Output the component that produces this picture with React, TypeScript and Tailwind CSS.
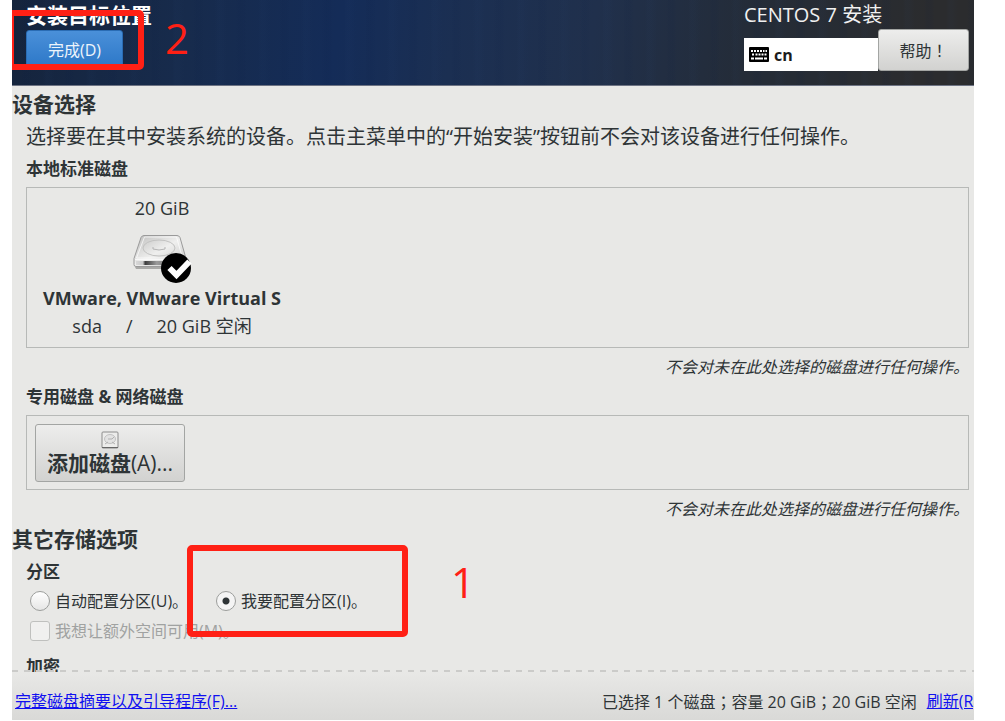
import { useState } from "react";
import type { ReactNode } from "react";

const KeyboardIcon = () => (
  <svg width="20" height="15" viewBox="0 0 20 15" aria-hidden="true">
    <rect width="20" height="15" rx="1" fill="#000" />
    <g fill="#fff">
      <path d="M2 3h2v2H2zM5 3h2v2H5zM8 3h2v2H8zM11 3h2v2h-2zM14 3h1.500v2H14zM16.500 3h1.500v2h-1.500z" />
      <path d="M3 6.500h2v2H3zM6.500 6.500h2v2h-2zM9.500 6.500h2v2h-2zM12.500 6.500h2v2h-2zM15.500 6.500h2v2h-2z" />
      <path d="M2 10.500h3v2H2zM6 10.500h8v2H6zM15 10.500h3v2h-3z" />
    </g>
  </svg>
);

const DiskIcon = () => (
  <svg width="60" height="50" viewBox="0 0 60 50" aria-hidden="true">
    <defs>
      <linearGradient id="disk-top" x1="0" y1="0" x2="1" y2="1">
        <stop offset="0" stopColor="#bdbdbc" />
        <stop offset="0.5" stopColor="#efefee" />
        <stop offset="1" stopColor="#c4c4c3" />
      </linearGradient>
      <linearGradient id="disk-front" x1="0" y1="0" x2="1" y2="0">
        <stop offset="0" stopColor="#d8d8d8" />
        <stop offset="0.15" stopColor="#c8c8c8" />
        <stop offset="0.2" stopColor="#3c3c3c" />
        <stop offset="0.45" stopColor="#9a9a9a" />
        <stop offset="1" stopColor="#5a5a5a" />
      </linearGradient>
    </defs>
    <path d="M3 33h50v2H4z" fill="#a9a9a7" />
    <path
      d="M12 1.500h33q2 0 3 2l6 21v6q0 2-2 2H4q-2 0-2-2v-6l7-21q1-2 3-2z"
      fill="url(#disk-top)"
      stroke="#9a9a9a"
    />
    <path d="M12.500 3h32l6 21h-46z" fill="none" stroke="#fff" strokeOpacity="0.7" />
    <path d="M4 27h46v4H4z" fill="url(#disk-front)" />
    <path d="M3 25.500h48" stroke="#f8f8f8" />
    <ellipse cx="27" cy="14" rx="16" ry="8" fill="none" stroke="#c2c2c1" />
    <path d="M21 13v2q6 2 12 0v-2" fill="none" stroke="#b4b4b4" />
    <circle cx="44" cy="34" r="15" fill="#000" />
    <path d="M37.500 34l7 7 13-13.500" fill="none" stroke="#fff" strokeWidth="6" />
  </svg>
);

const SmallDiskIcon = () => (
  <svg width="18" height="18" viewBox="0 0 18 18" aria-hidden="true">
    <rect x="1" y="1" width="16" height="16" rx="1" fill="#ececeb" stroke="#8c8c8c" />
    <path d="M1 16.500h16" stroke="#666" />
    <ellipse cx="9" cy="8" rx="5.500" ry="4.500" fill="#e2e2e2" stroke="#c2c2c2" />
    <path d="M4 13l3-2M14 13l-3-2M7 8h4l2-2" fill="none" stroke="#b0b0b0" />
  </svg>
);

const PanelNote = ({ children }: { children: ReactNode }) => (
  <p className="mt-[7px] text-right text-[16px] leading-6 italic">{children}</p>
);

const SectionLabel = ({ children }: { children: ReactNode }) => (
  <h3 className="text-[17px] leading-6 font-bold">{children}</h3>
);

// full-width punctuation sits in the middle of its cell
const Mark = ({ children }: { children: ReactNode }) => (
  <span className="font-['Noto_Sans_CJK_TC',sans-serif]" lang="zh-TW">
    {children}
  </span>
);

const radioClass =
  "size-5 shrink-0 appearance-none rounded-full border border-[#9c9e9c] bg-linear-to-b from-white to-[#e6e6e5] checked:bg-[radial-gradient(circle,#2e3436_0_3px,#f4f4f4_4px)]";

export default function App() {
  const [partitioning, setPartitioning] = useState("manual");

  return (
    <div className="h-screen bg-white pr-[31px] pb-px pl-3 font-['Open_Sans','Noto_Sans_CJK_SC',sans-serif] text-[#2e3436]">
      <div className="relative flex h-full flex-col overflow-hidden bg-[#e8e8e6]">
        <header className="flex h-[86px] shrink-0 justify-between border-b border-[#6d7383] bg-[repeating-linear-gradient(90deg,transparent_0_9px,#0a1c4412_12px_16px,transparent_20px_31px,#2c4a7a0d_34px_37px,transparent_43px),linear-gradient(100deg,#15243c_0%,#172b4c_18%,#142c58_34%,#1b2f52_46%,#20304c_60%,#242c38_76%,#2b2c2e_94%)] pr-[5px] pl-[14px] text-white">
          <div className="pt-px">
            <h1 className="text-[21px] leading-7 font-bold">安装目标位置</h1>
            <button
              type="button"
              className="mt-px h-10 w-[97px] rounded-[3px] border border-[#2a6cb4] bg-linear-to-b from-[#4a90d9] to-[#2a76c6] text-[16px] text-[#eef4fb]"
            >
              完成(D)
            </button>
          </div>
          <div className="w-[225px] pt-px">
            <div className="text-[20px] leading-7 text-[#f0f0f0]">CENTOS 7 安装</div>
            <div className="flex items-end">
              <div className="flex h-[33px] flex-1 items-center gap-[5px] bg-white pl-[5px] text-[16px] font-bold text-[#1c1c1c]">
                <KeyboardIcon />
                cn
              </div>
              <button
                type="button"
                className="h-[42px] w-[91px] rounded-[3px] border border-[#a3a5a3] bg-linear-to-b from-[#ededec] to-[#d2d2d0] text-[16px] text-[#2e3436]"
              >
                帮助<Mark>！</Mark>
              </button>
            </div>
          </div>
        </header>

        <main className="min-h-0 flex-1 overflow-hidden pt-1 pr-[5px]">
          <h2 className="text-[21px] leading-7 font-bold">设备选择</h2>
          <div className="pl-[14px]">
            <p className="mt-[5px] text-[20px] leading-7">
              选择要在其中安装系统的设备。点击主菜单中的“开始安装”按钮前不会对该设备进行任何操作。
            </p>
            <div className="mt-[6px]">
              <SectionLabel>本地标准磁盘</SectionLabel>
            </div>
            <div className="mt-[6px] h-[161px] border border-[#b7b9b7] pt-[6px] pl-[15px]">
              <div className="flex w-60 flex-col items-center text-[18px] leading-7 whitespace-nowrap">
                <span>20 GiB</span>
                <span className="mt-3">
                  <DiskIcon />
                </span>
                <b>VMware, VMware Virtual S</b>
                <div className="flex gap-6">
                  <span>sda</span>
                  <span>/</span>
                  <span>20 GiB 空闲</span>
                </div>
              </div>
            </div>
            <PanelNote>不会对未在此处选择的磁盘进行任何操作。</PanelNote>

            <div className="mt-[6px]">
              <SectionLabel>专用磁盘 &amp; 网络磁盘</SectionLabel>
            </div>
            <div className="mt-[6px] h-[75px] border border-[#b7b9b7] py-2 pl-2">
              <button
                type="button"
                className="flex h-[58px] w-[150px] flex-col items-center rounded-[3px] border border-[#a3a5a3] bg-linear-to-b from-[#ededec] to-[#d2d2d0] pt-[6px] text-[21px] leading-7 font-medium"
              >
                <SmallDiskIcon />
                <span>
                  <b>添加磁盘</b>(A)...
                </span>
              </button>
            </div>
            <PanelNote>不会对未在此处选择的磁盘进行任何操作。</PanelNote>
          </div>

          <h2 className="mt-1 text-[21px] leading-7 font-bold">其它存储选项</h2>
          <div className="pl-[14px] text-[16px] leading-6">
            <div className="mt-[7px]">
              <SectionLabel>分区</SectionLabel>
            </div>
            <div className="mt-[5px] flex pl-1">
              <label className="flex w-[186px] items-center gap-[5px] whitespace-nowrap">
                <input
                  type="radio"
                  name="partitioning"
                  className={radioClass}
                  checked={partitioning === "auto"}
                  onChange={() => setPartitioning("auto")}
                />
                自动配置分区(U)。
              </label>
              <label className="flex items-center gap-[5px] whitespace-nowrap">
                <input
                  type="radio"
                  name="partitioning"
                  className={radioClass}
                  checked={partitioning === "manual"}
                  onChange={() => setPartitioning("manual")}
                />
                我要配置分区(I)。
              </label>
            </div>
            <label className="mt-[6px] flex items-center gap-[5px] pl-1 text-[#a0a2a1]">
              <input
                type="checkbox"
                disabled
                className="size-5 shrink-0 appearance-none rounded-[3px] border border-[#bfc0be] bg-[#f0f0ef]"
              />
              我想让额外空间可用(M)。
            </label>
            <div className="mt-3">
              <SectionLabel>加密</SectionLabel>
            </div>
          </div>
        </main>

        <footer className="relative flex h-12 shrink-0 items-center justify-between bg-linear-to-b from-[#e8e8e6] to-[#d9d9d7] px-[3px] pt-[10px] text-[16px] leading-6 whitespace-nowrap">
          <div className="absolute inset-x-0 -top-0.5 h-0.5 bg-[repeating-linear-gradient(90deg,#cbcbc9_0_6px,transparent_6px_12px)]" />
          <a href="#summary" className="text-[#1010f0] underline">
            完整磁盘摘要以及引导程序(F)...
          </a>
          <div className="-mr-[7px] flex gap-[10px]">
            <span>
              已选择 1 个磁盘<Mark>；</Mark>容量 20 GiB<Mark>；</Mark>20 GiB 空闲
            </span>
            <a href="#refresh" className="text-[#1010f0] underline">
              刷新(R)
            </a>
          </div>
        </footer>

        {/* step markers drawn over the installer */}
        <div className="pointer-events-none absolute top-[10px] -left-1 h-[60px] w-[136px] rounded-[5px] border-6 border-[#ff2015]" />
        <span className="absolute top-[9px] left-[153px] text-[42px] leading-[58px] text-[#ff2015]">2</span>
        <div className="pointer-events-none absolute top-[545px] left-[175px] h-[92px] w-[221px] rounded-[5px] border-6 border-[#ff2015]" />
        <span className="absolute top-[553px] left-[439px] text-[42px] leading-[58px] text-[#ff2015]">1</span>
      </div>
    </div>
  );
}
